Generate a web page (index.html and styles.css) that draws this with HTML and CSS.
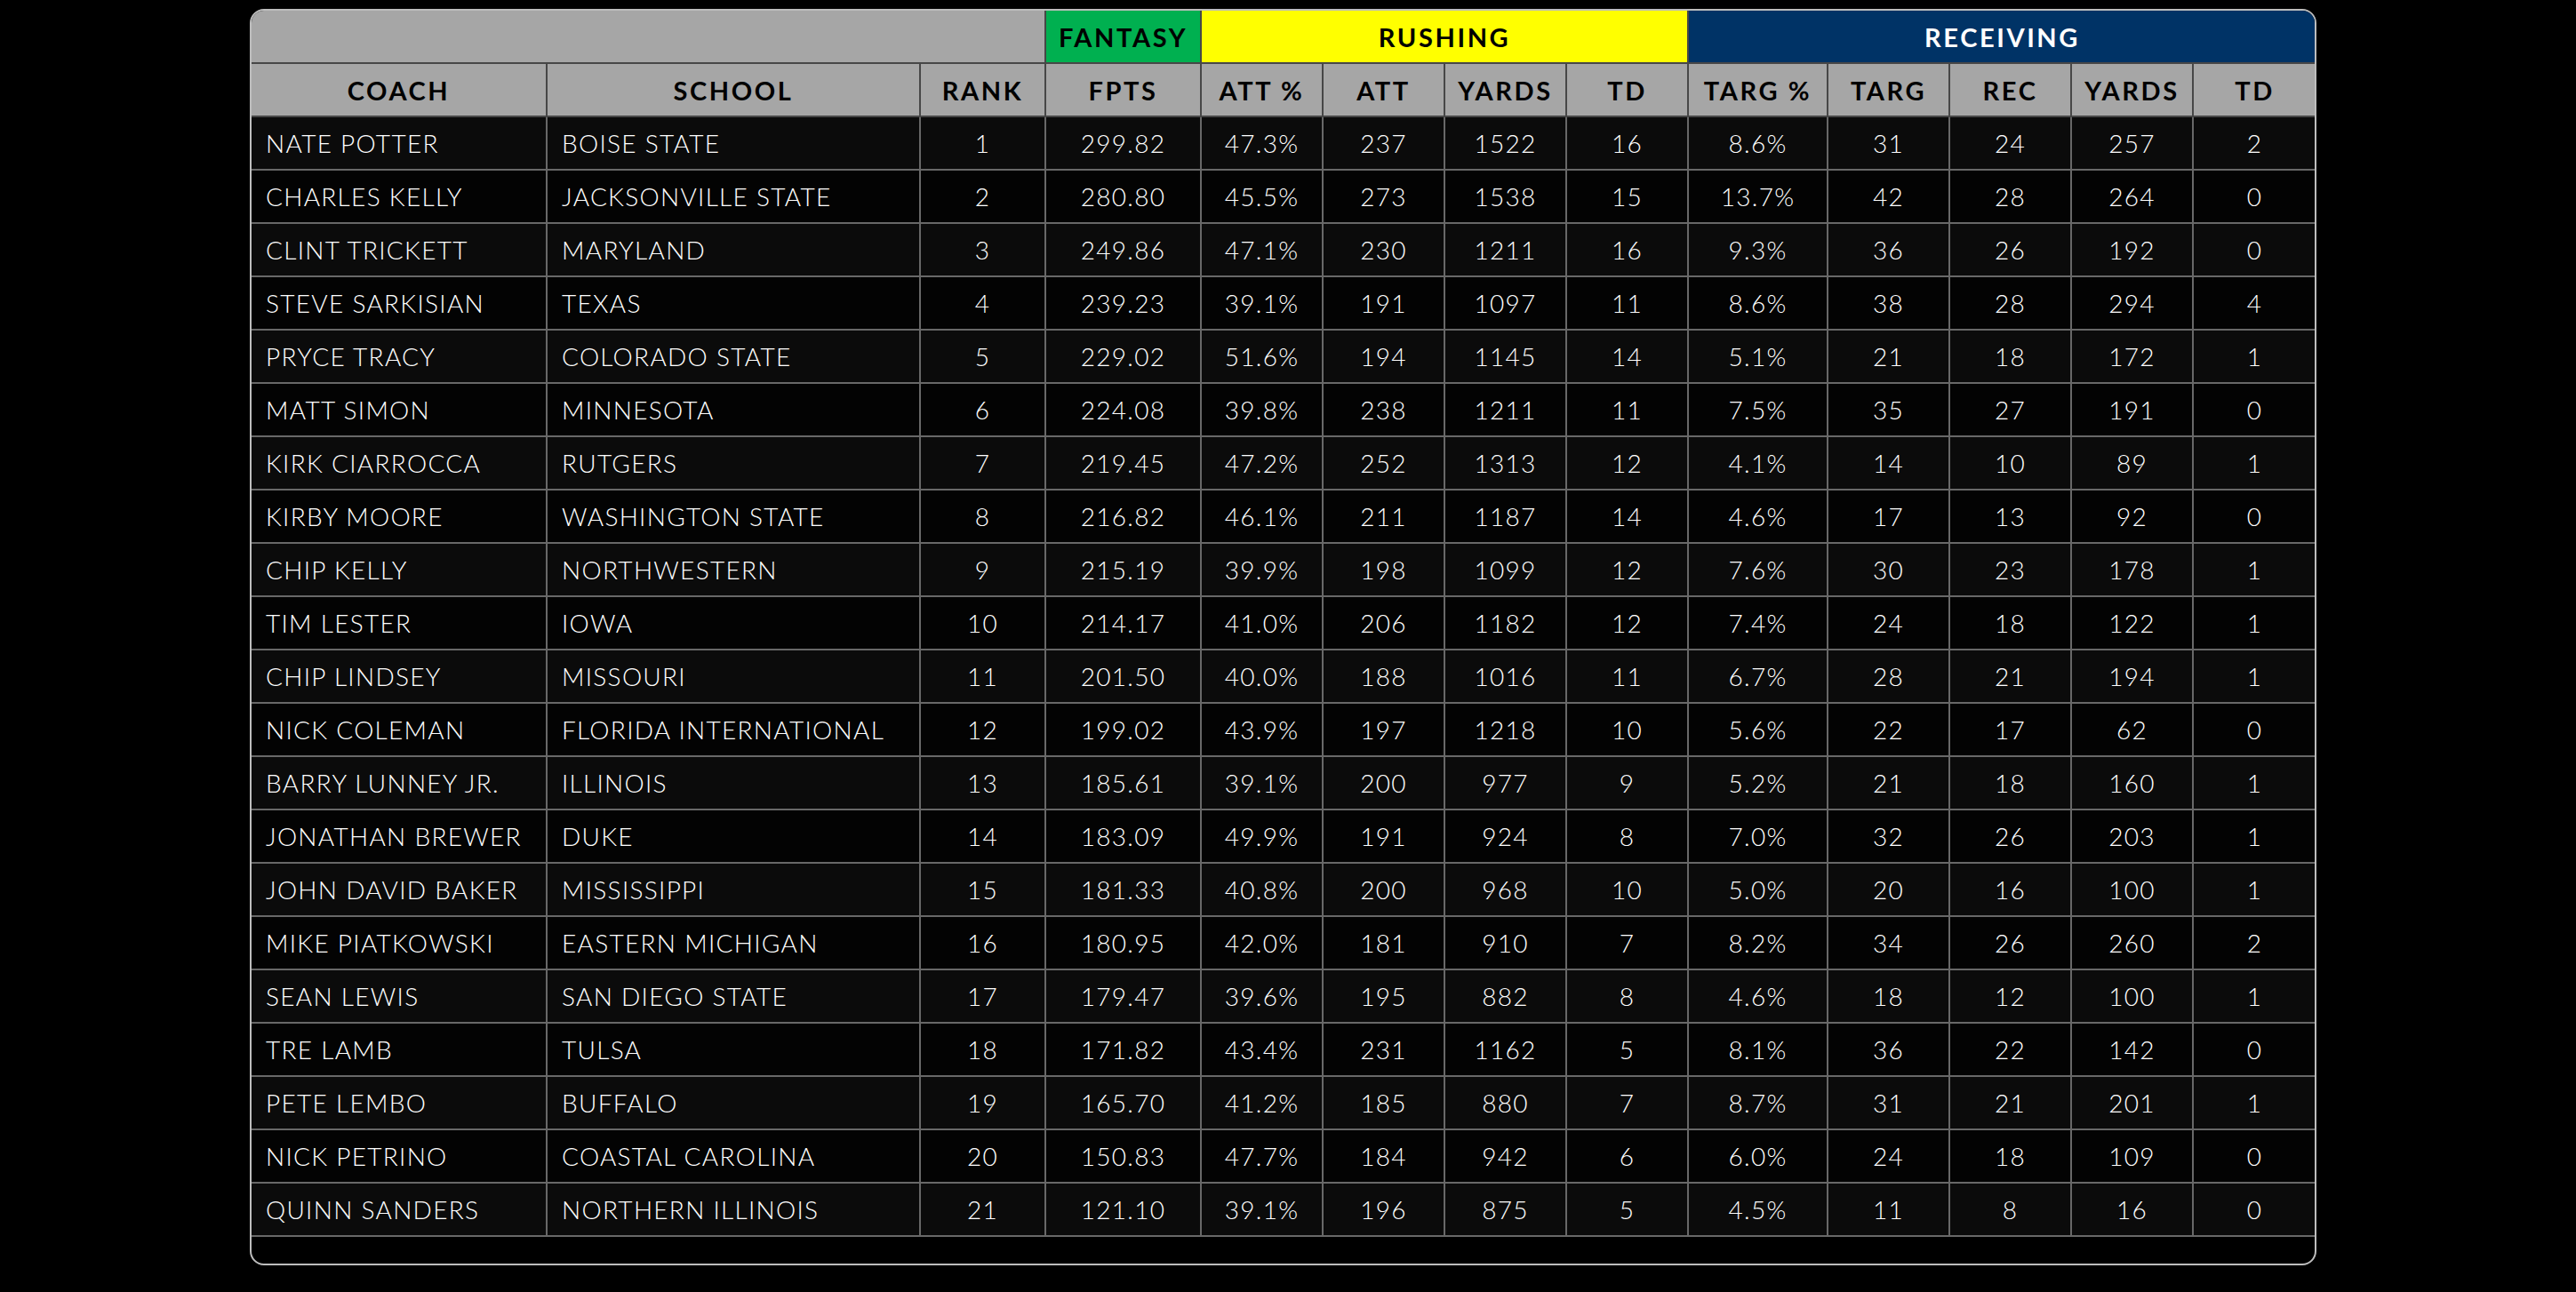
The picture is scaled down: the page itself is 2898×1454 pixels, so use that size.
FILE: index.html
```html
<!DOCTYPE html>
<html lang="en">
<head>
<meta charset="utf-8">
<title>Coach Fantasy Stats</title>
<link rel="stylesheet" href="styles.css">
</head>
<body>
<div class="page">
  <div class="board">
    <table class="stats">
      <colgroup>
        <col class="c-coach"><col class="c-school"><col class="c-rank"><col class="c-fpts">
        <col class="c-n"><col class="c-n"><col class="c-n"><col class="c-n">
        <col class="c-targp"><col class="c-n"><col class="c-n"><col class="c-n"><col class="c-td">
      </colgroup>
      <thead>
        <tr class="groups">
          <th colspan="3" class="g-blank"></th>
          <th class="g-fantasy">FANTASY</th>
          <th colspan="4" class="g-rushing">RUSHING</th>
          <th colspan="5" class="g-receiving">RECEIVING</th>
        </tr>
        <tr class="labels">
          <th>COACH</th><th>SCHOOL</th><th>RANK</th><th>FPTS</th>
          <th>ATT %</th><th>ATT</th><th>YARDS</th><th>TD</th>
          <th>TARG %</th><th>TARG</th><th>REC</th><th>YARDS</th><th>TD</th>
        </tr>
      </thead>
      <tbody>
        <tr><td class="t">NATE POTTER</td><td class="t">BOISE STATE</td><td>1</td><td>299.82</td><td>47.3%</td><td>237</td><td>1522</td><td>16</td><td>8.6%</td><td>31</td><td>24</td><td>257</td><td>2</td></tr>
        <tr><td class="t">CHARLES KELLY</td><td class="t">JACKSONVILLE STATE</td><td>2</td><td>280.80</td><td>45.5%</td><td>273</td><td>1538</td><td>15</td><td>13.7%</td><td>42</td><td>28</td><td>264</td><td>0</td></tr>
        <tr><td class="t">CLINT TRICKETT</td><td class="t">MARYLAND</td><td>3</td><td>249.86</td><td>47.1%</td><td>230</td><td>1211</td><td>16</td><td>9.3%</td><td>36</td><td>26</td><td>192</td><td>0</td></tr>
        <tr><td class="t">STEVE SARKISIAN</td><td class="t">TEXAS</td><td>4</td><td>239.23</td><td>39.1%</td><td>191</td><td>1097</td><td>11</td><td>8.6%</td><td>38</td><td>28</td><td>294</td><td>4</td></tr>
        <tr><td class="t">PRYCE TRACY</td><td class="t">COLORADO STATE</td><td>5</td><td>229.02</td><td>51.6%</td><td>194</td><td>1145</td><td>14</td><td>5.1%</td><td>21</td><td>18</td><td>172</td><td>1</td></tr>
        <tr><td class="t">MATT SIMON</td><td class="t">MINNESOTA</td><td>6</td><td>224.08</td><td>39.8%</td><td>238</td><td>1211</td><td>11</td><td>7.5%</td><td>35</td><td>27</td><td>191</td><td>0</td></tr>
        <tr><td class="t">KIRK CIARROCCA</td><td class="t">RUTGERS</td><td>7</td><td>219.45</td><td>47.2%</td><td>252</td><td>1313</td><td>12</td><td>4.1%</td><td>14</td><td>10</td><td>89</td><td>1</td></tr>
        <tr><td class="t">KIRBY MOORE</td><td class="t">WASHINGTON STATE</td><td>8</td><td>216.82</td><td>46.1%</td><td>211</td><td>1187</td><td>14</td><td>4.6%</td><td>17</td><td>13</td><td>92</td><td>0</td></tr>
        <tr><td class="t">CHIP KELLY</td><td class="t">NORTHWESTERN</td><td>9</td><td>215.19</td><td>39.9%</td><td>198</td><td>1099</td><td>12</td><td>7.6%</td><td>30</td><td>23</td><td>178</td><td>1</td></tr>
        <tr><td class="t">TIM LESTER</td><td class="t">IOWA</td><td>10</td><td>214.17</td><td>41.0%</td><td>206</td><td>1182</td><td>12</td><td>7.4%</td><td>24</td><td>18</td><td>122</td><td>1</td></tr>
        <tr><td class="t">CHIP LINDSEY</td><td class="t">MISSOURI</td><td>11</td><td>201.50</td><td>40.0%</td><td>188</td><td>1016</td><td>11</td><td>6.7%</td><td>28</td><td>21</td><td>194</td><td>1</td></tr>
        <tr><td class="t">NICK COLEMAN</td><td class="t">FLORIDA INTERNATIONAL</td><td>12</td><td>199.02</td><td>43.9%</td><td>197</td><td>1218</td><td>10</td><td>5.6%</td><td>22</td><td>17</td><td>62</td><td>0</td></tr>
        <tr><td class="t">BARRY LUNNEY JR.</td><td class="t">ILLINOIS</td><td>13</td><td>185.61</td><td>39.1%</td><td>200</td><td>977</td><td>9</td><td>5.2%</td><td>21</td><td>18</td><td>160</td><td>1</td></tr>
        <tr><td class="t">JONATHAN BREWER</td><td class="t">DUKE</td><td>14</td><td>183.09</td><td>49.9%</td><td>191</td><td>924</td><td>8</td><td>7.0%</td><td>32</td><td>26</td><td>203</td><td>1</td></tr>
        <tr><td class="t">JOHN DAVID BAKER</td><td class="t">MISSISSIPPI</td><td>15</td><td>181.33</td><td>40.8%</td><td>200</td><td>968</td><td>10</td><td>5.0%</td><td>20</td><td>16</td><td>100</td><td>1</td></tr>
        <tr><td class="t">MIKE PIATKOWSKI</td><td class="t">EASTERN MICHIGAN</td><td>16</td><td>180.95</td><td>42.0%</td><td>181</td><td>910</td><td>7</td><td>8.2%</td><td>34</td><td>26</td><td>260</td><td>2</td></tr>
        <tr><td class="t">SEAN LEWIS</td><td class="t">SAN DIEGO STATE</td><td>17</td><td>179.47</td><td>39.6%</td><td>195</td><td>882</td><td>8</td><td>4.6%</td><td>18</td><td>12</td><td>100</td><td>1</td></tr>
        <tr><td class="t">TRE LAMB</td><td class="t">TULSA</td><td>18</td><td>171.82</td><td>43.4%</td><td>231</td><td>1162</td><td>5</td><td>8.1%</td><td>36</td><td>22</td><td>142</td><td>0</td></tr>
        <tr><td class="t">PETE LEMBO</td><td class="t">BUFFALO</td><td>19</td><td>165.70</td><td>41.2%</td><td>185</td><td>880</td><td>7</td><td>8.7%</td><td>31</td><td>21</td><td>201</td><td>1</td></tr>
        <tr><td class="t">NICK PETRINO</td><td class="t">COASTAL CAROLINA</td><td>20</td><td>150.83</td><td>47.7%</td><td>184</td><td>942</td><td>6</td><td>6.0%</td><td>24</td><td>18</td><td>109</td><td>0</td></tr>
        <tr><td class="t">QUINN SANDERS</td><td class="t">NORTHERN ILLINOIS</td><td>21</td><td>121.10</td><td>39.1%</td><td>196</td><td>875</td><td>5</td><td>4.5%</td><td>11</td><td>8</td><td>16</td><td>0</td></tr>
      </tbody>
    </table>
  </div>
</div>
</body>
</html>
```
FILE: styles.css
```css
html, body {
  margin: 0;
  padding: 0;
  background: #000;
}

.page {
  padding: 10px 0 0 281px;
}

.board {
  width: 2321px;
  border: 2px solid #bdbdbd;
  border-radius: 16px;
  overflow: hidden;
  background: #000;
  padding-bottom: 30px;
}

.stats {
  width: 2321px;
  table-layout: fixed;
  border-collapse: collapse;
  font-family: Lato, "Liberation Sans", sans-serif;
  font-size: 28px;
  letter-spacing: 1.3px;
}

.c-coach { width: 332px; }
.c-school { width: 420px; }
.c-rank { width: 141px; }
.c-fpts { width: 175px; }
.c-n { width: 137px; }
.c-targp { width: 157px; }
.c-td { width: 138px; }

.stats th {
  height: 58px;
  padding: 0;
  border: 2px solid #474747;
  background: #a6a6a6;
  color: #000;
  font-size: 29px;
  font-weight: 700;
  letter-spacing: 2.6px;
  text-align: center;
  vertical-align: middle;
}

.stats tr.groups th { border-top: none; }
.stats tr > :first-child { border-left: none; }
.stats tr > :last-child { border-right: none; }

.stats th.g-fantasy { background: #00b050; }
.stats th.g-rushing { background: #ffff00; }
.stats th.g-receiving { background: #003366; color: #fff; }

.stats td {
  height: 58px;
  padding: 0;
  border: 2px solid #686868;
  color: #fff;
  font-weight: 300;
  text-align: center;
  vertical-align: middle;
  white-space: nowrap;
}

.stats td.t {
  text-align: left;
  padding-left: 16px;
}

.stats tbody tr:nth-child(odd) td { background: #0b0b0b; }
.stats tbody tr:nth-child(even) td { background: #030303; }
```
